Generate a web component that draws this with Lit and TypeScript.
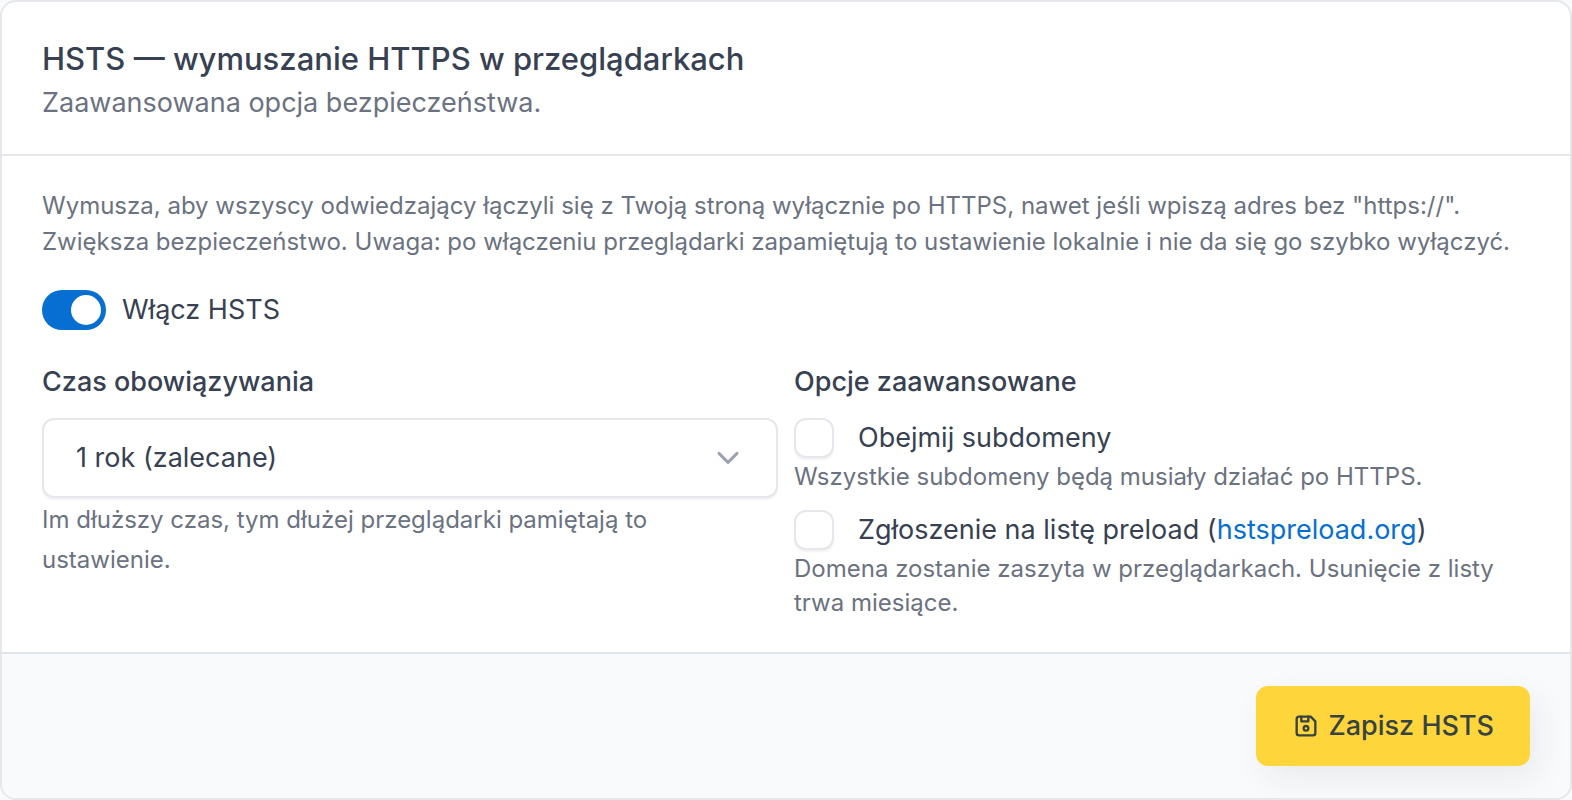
import { LitElement, html, css } from "lit";
import { customElement } from "lit/decorators.js";

@customElement("app-root")
export class AppRoot extends LitElement {
  static styles = css`
    :host { display: block; background: #f9fafb; font-family: Inter, "Noto Sans", sans-serif; color: #374151; }
    * { box-sizing: border-box; }
    .card { display: flex; flex-direction: column; min-height: 100vh; background: #fff; border: 2px solid #e5e7eb; border-radius: 16px; overflow: hidden; }
    .head { padding: 36px 40px 30px; border-bottom: 2px solid #e5e7eb; }
    h1, p { margin: 0; }
    h1 { font-size: 31px; line-height: 42px; font-weight: 500; }
    .subtitle { margin-top: 2px; font-size: 27px; line-height: 42px; color: #6b7280; }
    .body { flex: 1; padding: 32px 40px; }
    .hint { font-size: 24px; line-height: 36px; color: #6b7280; }
    .hint.tall { margin-top: 2px; line-height: 40px; }
    .hint.tight { margin-top: 2px; line-height: 34px; }
    .switch { display: flex; align-items: center; gap: 16px; margin-top: 30px; font-size: 27px; line-height: 40px; }
    .switch input { appearance: none; margin: 0; width: 64px; height: 40px; padding: 5px; border-radius: 20px; background: #9ca3af; display: flex; }
    .switch input::before { content: ""; width: 30px; height: 30px; border-radius: 50%; background: #fff; }
    .switch input:checked { background: #066fd1; justify-content: flex-end; }
    .columns { display: grid; grid-template-columns: 1fr 1fr; gap: 16px; margin-top: 32px; }
    .label { display: block; margin: 0 0 16px; padding: 0; font-size: 27px; line-height: 40px; font-weight: 500; }
    fieldset { border: 0; margin: 0; padding: 0; min-width: 0; }
    .select { display: grid; align-items: center; }
    .select > * { grid-area: 1 / 1; }
    .select svg { justify-self: end; margin-right: 34px; pointer-events: none; }
    select { appearance: none; width: 100%; height: 80px; padding: 0 32px; border: 2px solid #e5e7eb; border-radius: 12px; background: #fff; color: inherit; font: 400 27px/40px Inter, sans-serif; box-shadow: 0 2px 2px rgba(31, 41, 55, 0.06); }
    .check { display: flex; align-items: center; gap: 24px; font-size: 27px; line-height: 40px; }
    .check input { appearance: none; margin: 0; width: 40px; height: 40px; border: 2px solid #e5e7eb; border-radius: 12px; background: #fff; box-shadow: 0 2px 2px rgba(31, 41, 55, 0.06); }
    .option + .option { margin-top: 16px; }
    a { color: #066fd1; text-decoration: none; }
    .foot { display: flex; justify-content: flex-end; padding: 32px 40px; border-top: 2px solid #e0e3e8; background: #f9fafb; }
    button { display: flex; align-items: center; gap: 8px; height: 80px; padding: 0 36px; border: 0; border-radius: 12px; background: #ffd53c; color: #374340; font: 500 27px/40px Inter, sans-serif; box-shadow: 8px 12px 32px rgba(31, 41, 55, 0.07); }
  `;

  render() {
    return html`
      <section class="card">
        <header class="head">
          <h1>HSTS — wymuszanie HTTPS w przeglądarkach</h1>
          <p class="subtitle">Zaawansowana opcja bezpieczeństwa.</p>
        </header>
        <div class="body">
          <p class="hint">Wymusza, aby wszyscy odwiedzający łączyli się z Twoją stroną wyłącznie po HTTPS, nawet jeśli wpiszą adres bez "https://". Zwiększa bezpieczeństwo. Uwaga: po włączeniu przeglądarki zapamiętują to ustawienie lokalnie i nie da się go szybko wyłączyć.</p>
          <label class="switch"><input type="checkbox" role="switch" checked />Włącz HSTS</label>
          <div class="columns">
            <div>
              <label class="label" for="age">Czas obowiązywania</label>
              <div class="select">
                <select id="age"><option>1 rok (zalecane)</option></select>
                <svg width="32" height="32" viewBox="0 0 16 16" fill="none" stroke="#9ca3af" stroke-width="1.5" stroke-linecap="round" stroke-linejoin="round"><path d="M3.5 5.7l4.5 4.5L12.5 5.7" /></svg>
              </div>
              <p class="hint tall">Im dłuższy czas, tym dłużej przeglądarki pamiętają to ustawienie.</p>
            </div>
            <fieldset>
              <legend class="label">Opcje zaawansowane</legend>
              <div class="option">
                <label class="check"><input type="checkbox" />Obejmij subdomeny</label>
                <p class="hint tight">Wszystkie subdomeny będą musiały działać po HTTPS.</p>
              </div>
              <div class="option">
                <label class="check"><input type="checkbox" /><span>Zgłoszenie na listę preload (<a href="#">hstspreload.org</a>)</span></label>
                <p class="hint tight">Domena zostanie zaszyta w przeglądarkach. Usunięcie z listy trwa miesiące.</p>
              </div>
            </fieldset>
          </div>
        </div>
        <footer class="foot">
          <button type="button">
            <svg width="28" height="28" viewBox="0 0 24 24" fill="none" stroke="currentColor" stroke-width="2" stroke-linecap="round" stroke-linejoin="round"><path d="M6 4h10l4 4v10a2 2 0 0 1 -2 2h-12a2 2 0 0 1 -2 -2v-12a2 2 0 0 1 2 -2" /><circle cx="12" cy="14" r="2" /><path d="M14 4v4h-6v-4" /></svg>
            Zapisz HSTS
          </button>
        </footer>
      </section>
    `;
  }
}
